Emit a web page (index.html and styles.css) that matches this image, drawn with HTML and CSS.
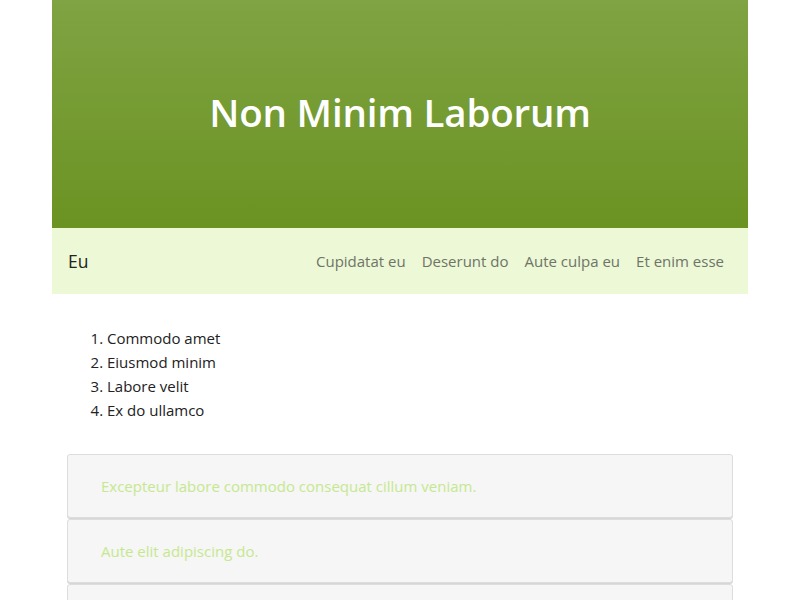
FILE: index.html
```html
<!DOCTYPE html>
<html>
<head>
<meta charset="utf-8">
<link rel="stylesheet" href="styles.css">
</head>
<body>
<div class="page">
  <header class="hero">
    <h1 class="hero-title">Non Minim Laborum</h1>
  </header>
  <nav class="nav">
    <span class="brand">Eu</span>
    <ul class="nav-links">
      <li><a href="#">Cupidatat eu</a></li>
      <li><a href="#">Deserunt do</a></li>
      <li><a href="#">Aute culpa eu</a></li>
      <li><a href="#">Et enim esse</a></li>
    </ul>
  </nav>
  <main class="content">
    <ol class="list">
      <li>Commodo amet</li>
      <li>Eiusmod minim</li>
      <li>Labore velit</li>
      <li>Ex do ullamco</li>
    </ol>
    <div class="cards">
      <div class="card">Excepteur labore commodo consequat cillum veniam.</div>
      <div class="card">Aute elit adipiscing do.</div>
      <div class="card"></div>
    </div>
  </main>
</div>
</body>
</html>
```
FILE: styles.css
```css
* { box-sizing: border-box; }
html, body { margin: 0; padding: 0; background: #fff; }
body {
  font-family: "Open Sans", "Noto Sans", sans-serif;
  font-size: 15px;
  line-height: 24px;
  color: #222;
}
.page {
  width: 696px;
  margin: 0 auto;
}
.hero {
  height: 228px;
  background: linear-gradient(to bottom, #80a343, #6a9322);
  display: flex;
  align-items: center;
  justify-content: center;
}
.hero-title {
  margin: 0 0 4px;
  color: #fff;
  font-size: 38.5px;
  font-weight: 600;
  line-height: 48px;
  letter-spacing: -0.2px;
}
.nav {
  height: 66px;
  background: #ecf8d6;
  display: flex;
  align-items: center;
  justify-content: space-between;
  padding: 0 24px 0 16px;
}
.brand {
  font-size: 17.5px;
  color: #222;
}
.nav-links {
  list-style: none;
  margin: 0;
  padding: 0;
  display: flex;
  gap: 16px;
}
.nav-links a {
  color: #6f7466;
  text-decoration: none;
  font-size: 15px;
}
.content {
  padding: 16px 15px;
}
.list {
  margin: 16px 0 32px;
  padding-left: 40px;
}
.cards {
  display: flex;
  flex-direction: column;
  gap: 1px;
}
.card {
  background: #f6f6f6;
  border: 1px solid #ddd;
  border-radius: 3px;
  box-shadow: 0 1px 0 #d6d6d6;
  padding: 19px 33px;
  height: 64px;
  color: #c5e88f;
  font-size: 15px;
}
```
